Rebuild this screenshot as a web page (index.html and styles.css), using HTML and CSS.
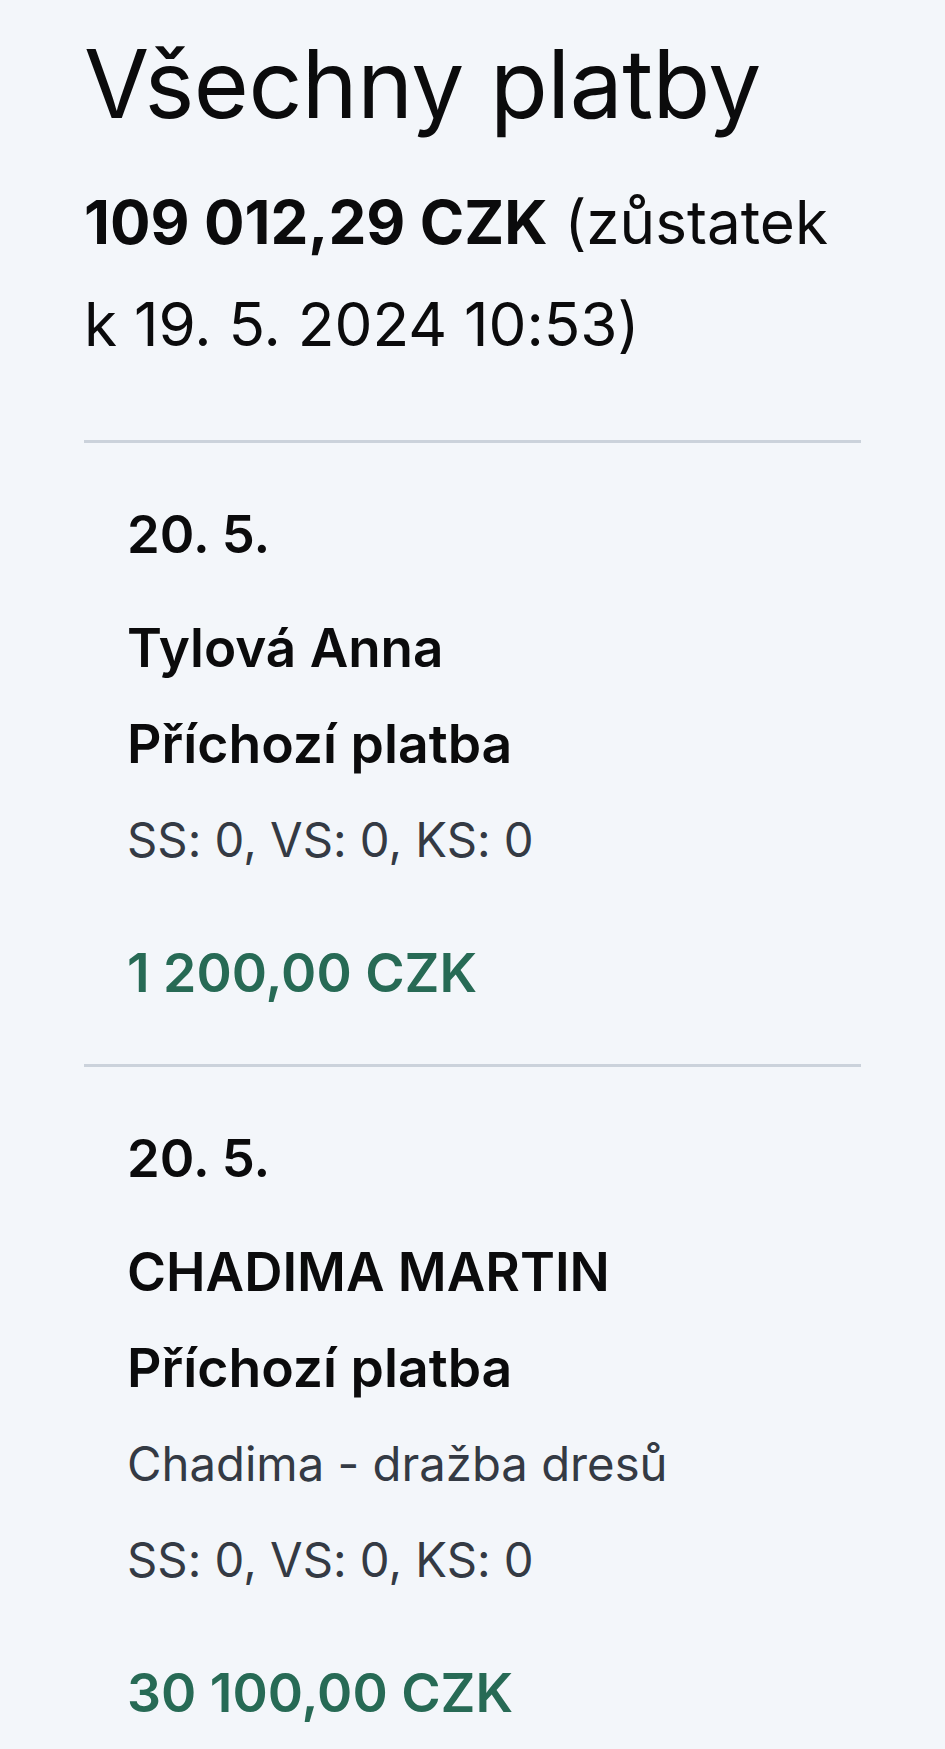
FILE: index.html
```html
<!DOCTYPE html>
<html lang="cs">
<head>
<meta charset="utf-8">
<title>Všechny platby</title>
<link rel="stylesheet" href="styles.css">
</head>
<body>
<main class="page">
  <header class="head">
    <h1 class="title">Všechny platby</h1>
    <p class="balance"><strong>109 012,29 CZK</strong> (zůstatek k&nbsp;19. 5. 2024 10:53)</p>
  </header>
  <ul class="list">
    <li class="item">
      <div class="date">20. 5.</div>
      <div class="name">Tylová Anna</div>
      <div class="type">Příchozí platba</div>
      <div class="meta">SS: 0, VS: 0, KS: 0</div>
      <div class="amount">1 200,00 CZK</div>
    </li>
    <li class="item">
      <div class="date">20. 5.</div>
      <div class="name">CHADIMA MARTIN</div>
      <div class="type">Příchozí platba</div>
      <div class="meta">Chadima - dražba dresů</div>
      <div class="meta">SS: 0, VS: 0, KS: 0</div>
      <div class="amount">30 100,00 CZK</div>
    </li>
  </ul>
</main>
</body>
</html>
```
FILE: styles.css
```css
html, body {
  margin: 0;
  padding: 0;
  background: #f3f6fa;
}
body {
  font-family: Inter, "Noto Sans", sans-serif;
  font-feature-settings: "calt" 0;
  color: #0b0b0c;
}
.page {
  padding: 27px 84px 0;
}
.title {
  margin: 0;
  font-size: 94.5px;
  line-height: 113px;
  font-weight: 400;
  letter-spacing: -0.5px;
}
.balance {
  margin: 32px 0 0;
  font-size: 60.2px;
  line-height: 102px;
  font-weight: 400;
}
.balance strong {
  font-weight: 700;
}
.list {
  list-style: none;
  margin: 64px 0 0;
  padding: 0;
}
.item {
  border-top: 3px solid #cbd2db;
  padding: 43px 0 43px 43px;
  display: flex;
  flex-direction: column;
}
.date, .name, .type, .amount {
  font-size: 53.5px;
  line-height: 96px;
  font-weight: 600;
}
.date {
  font-size: 52.5px;
  margin-bottom: 18px;
}
.name {
  font-size: 53px;
}
.meta {
  font-size: 47.25px;
  line-height: 96px;
  color: #343a44;
}
.amount {
  margin-top: 37px;
  color: #276a55;
}
```
